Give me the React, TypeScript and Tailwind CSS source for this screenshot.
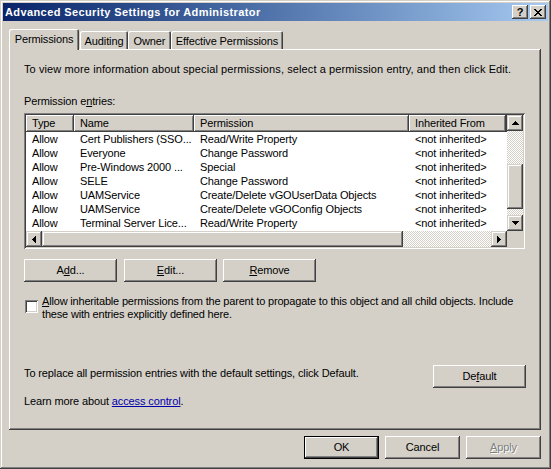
import React from 'react';

// classic 3D edges
const raised = 'shadow-[inset_-1px_-1px_#404040,inset_1px_1px_#ffffff,inset_-2px_-2px_#808080]';
const raisedScroll = 'shadow-[inset_-1px_-1px_#404040,inset_1px_1px_#d4d0c8,inset_-2px_-2px_#808080,inset_2px_2px_#ffffff]';
const sunken = 'shadow-[inset_1px_1px_#808080,inset_-1px_-1px_#ffffff,inset_2px_2px_#404040,inset_-2px_-2px_#d4d0c8]';
const dither = 'bg-[image:repeating-conic-gradient(#ffffff_0%_25%,#d4d0c8_0%_50%)] bg-[length:2px_2px]';
const tab = 'rounded-t-[2px] shadow-[inset_1px_1px_#ffffff,inset_-1px_0_#404040,inset_-2px_0_#808080]';

const cols = [
  { label: 'Type', w: 'w-[48px]' },
  { label: 'Name', w: 'w-[120px]' },
  { label: 'Permission', w: 'w-[215px]' },
  { label: 'Inherited From', w: 'w-[97px]' },
];

const rows = [
  ['Allow', 'Cert Publishers (SSO...', 'Read/Write Property', '<not inherited>'],
  ['Allow', 'Everyone', 'Change Password', '<not inherited>'],
  ['Allow', 'Pre-Windows 2000 ...', 'Special', '<not inherited>'],
  ['Allow', 'SELE', 'Change Password', '<not inherited>'],
  ['Allow', 'UAMService', 'Create/Delete vGOUserData Objects', '<not inherited>'],
  ['Allow', 'UAMService', 'Create/Delete vGOConfig Objects', '<not inherited>'],
  ['Allow', 'Terminal Server Lice...', 'Read/Write Property', '<not inherited>'],
  ['Allow', 'Authenticated Users', 'Read Permissions', '<not inherited>'],
];

const Arrow = ({ dir }: { dir: 'up' | 'down' | 'left' | 'right' }) => {
  const paths = {
    up: 'M3 0h1v1h1v1h1v1h1v1H0V3h1V2h1V1h1z',
    down: 'M0 0h7v1H6v1H5v1H4v1H3V3H2V2H1V1H0z',
    left: 'M3 0h1v7H3V6H2V5H1V4H0V3h1V2h1V1h1z',
    right: 'M0 0h1v1h1v1h1v1h1v1H3v1H2v1H1v1H0z',
  };
  const vertical = dir === 'up' || dir === 'down';
  return (
    <svg width={vertical ? 7 : 4} height={vertical ? 4 : 7} shapeRendering="crispEdges">
      <path d={paths[dir]} fill="#000" />
    </svg>
  );
};

const ScrollBtn = ({ dir }: { dir: 'up' | 'down' | 'left' | 'right' }) => (
  <div className={`w-[16px] h-[16px] shrink-0 flex items-center justify-center bg-[#d4d0c8] ${raisedScroll}`}>
    <Arrow dir={dir} />
  </div>
);

const Btn = ({
  children,
  className = '',
  isDefault = false,
  disabled = false,
}: {
  children: React.ReactNode;
  className?: string;
  isDefault?: boolean;
  disabled?: boolean;
}) => (
  <div
    className={`h-[23px] flex items-center justify-center bg-[#d4d0c8] ${
      isDefault ? 'border border-black' : ''
    } ${raised} ${disabled ? 'text-[#808080] [text-shadow:1px_1px_0_#ffffff]' : 'text-black'} ${className}`}
  >
    {children}
  </div>
);

const CloseGlyph = () => {
  const px = [
    [0, 0], [1, 0], [6, 0], [7, 0],
    [1, 1], [2, 1], [5, 1], [6, 1],
    [2, 2], [3, 2], [4, 2], [5, 2],
    [3, 3], [4, 3],
    [2, 4], [3, 4], [4, 4], [5, 4],
    [1, 5], [2, 5], [5, 5], [6, 5],
    [0, 6], [1, 6], [6, 6], [7, 6],
  ];
  return (
    <svg width="8" height="7" shapeRendering="crispEdges">
      {px.map(([x, y]) => (
        <rect key={`${x}-${y}`} x={x} y={y} width="1" height="1" fill="#000" />
      ))}
    </svg>
  );
};

const App: React.FC = () => {
  return (
    <div
      className={`w-[551px] h-[469px] p-[3px] bg-[#d4d0c8] text-[11px] tracking-[-0.12px] text-black font-['Liberation_Sans',Arial,sans-serif] shadow-[inset_-1px_-1px_#404040,inset_1px_1px_#d4d0c8,inset_-2px_-2px_#808080,inset_2px_2px_#ffffff]`}
    >
      {/* title bar */}
      <div className="h-[18px] flex items-center justify-between bg-linear-to-r from-[#0a246a] to-[#a6caf0]">
        <span className="pl-[2px] text-white font-bold tracking-[0.4px] leading-[18px]">
          Advanced Security Settings for Administrator
        </span>
        <div className="flex gap-[2px] pr-[2px]">
          <div className={`w-[16px] h-[14px] flex items-center justify-center bg-[#d4d0c8] font-bold text-[11px] leading-none ${raised}`}>
            ?
          </div>
          <div className={`w-[16px] h-[14px] flex items-center justify-center bg-[#d4d0c8] ${raised}`}>
            <CloseGlyph />
          </div>
        </div>
      </div>

      <div className="pl-[6px]">
        {/* tabs */}
        <div className="mt-[8px] h-[20px] flex items-end relative z-10">
          <div className={`w-[70px] h-[21px] -mb-[1px] flex justify-center pt-[2px] bg-[#d4d0c8] ${tab}`}>Permissions</div>
          <div className={`ml-[1px] w-[48px] h-[18px] flex justify-center pt-[2px] ${tab}`}>Auditing</div>
          <div className={`w-[43px] h-[18px] flex justify-center pt-[2px] ${tab}`}>Owner</div>
          <div className={`w-[112px] h-[18px] flex justify-center pt-[2px] ${tab}`}>Effective Permissions</div>
        </div>

        {/* tab panel */}
        <div className={`w-[532px] h-[381px] pl-[15px] pr-[15px] pt-[14px] leading-[13px] ${raised}`}>
          <p className="tracking-[0.1px] whitespace-nowrap">
            To view more information about special permissions, select a permission entry, and then click Edit.
          </p>
          <p className="mt-[19px]">
            Permission e<span className="underline">n</span>tries:
          </p>

          {/* list view */}
          <div className={`mt-[5px] w-[501px] h-[136px] p-[2px] bg-white ${sunken}`}>
            <div className="flex h-full">
              <div className="w-[481px] flex flex-col">
                <div className="flex-1 overflow-hidden">
                  <div className="flex h-[17px] bg-[#d4d0c8]">
                    {cols.map((c) => (
                      <div key={c.label} className={`${c.w} shrink-0 h-[17px] pl-[6px] pt-[2px] ${raised}`}>
                        {c.label}
                      </div>
                    ))}
                    <div className={`flex-1 h-[17px] ${raised}`} />
                  </div>
                  {rows.map((r, i) => (
                    <div key={i} className="flex h-[14px] pt-[1px] leading-[12px] whitespace-nowrap">
                      {r.map((cell, j) => (
                        <div key={j} className={`${cols[j].w} shrink-0 pl-[6px] overflow-hidden`}>
                          {cell}
                        </div>
                      ))}
                    </div>
                  ))}
                </div>
                {/* horizontal scrollbar */}
                <div className="h-[16px] flex">
                  <ScrollBtn dir="left" />
                  <div className={`w-[361px] h-[16px] bg-[#d4d0c8] ${raisedScroll}`} />
                  <div className={`flex-1 h-[16px] ${dither}`} />
                  <ScrollBtn dir="right" />
                </div>
              </div>
              {/* vertical scrollbar */}
              <div className="w-[16px] flex flex-col">
                <ScrollBtn dir="up" />
                <div className={`h-[33px] ${dither}`} />
                <div className={`h-[45px] bg-[#d4d0c8] ${raisedScroll}`} />
                <div className={`h-[6px] ${dither}`} />
                <ScrollBtn dir="down" />
                <div className="h-[16px] bg-[#d4d0c8]" />
              </div>
            </div>
          </div>

          {/* buttons */}
          <div className="mt-[10px] flex">
            <Btn className="w-[93px]">
              A<span className="underline">d</span>d...
            </Btn>
            <Btn className="w-[93px] ml-[7px]">
              <span className="underline">E</span>dit...
            </Btn>
            <Btn className="w-[93px] ml-[6px]">
              <span className="underline">R</span>emove
            </Btn>
          </div>

          {/* inherit checkbox */}
          <div className="mt-[13px] flex">
            <div className={`mt-[5px] ml-[1px] w-[13px] h-[13px] shrink-0 bg-white ${sunken}`} />
            <p className="ml-[4px] whitespace-nowrap tracking-[-0.18px]">
              <span className="underline">A</span>llow inheritable permissions from the parent to propagate to this object and all child objects. Include
              <br />
              these with entries explicitly defined here.
            </p>
          </div>

          <div className="mt-[44px] flex items-start justify-between">
            <p className="mt-[2px]">To replace all permission entries with the default settings, click Default.</p>
            <Btn className="w-[93px]">
              De<span className="underline">f</span>ault
            </Btn>
          </div>

          <p className="mt-[7px]">
            Learn more about <span className="text-[#0000aa] underline">access control</span>.
          </p>
        </div>

        {/* dialog buttons */}
        <div className="mt-[6px] pr-[7px] flex justify-end gap-[6px]">
          <Btn className="w-[75px]" isDefault>
            OK
          </Btn>
          <Btn className="w-[75px]">Cancel</Btn>
          <Btn className="w-[75px]" disabled>
            <span className="underline">A</span>pply
          </Btn>
        </div>
      </div>
    </div>
  );
};

export default App;
